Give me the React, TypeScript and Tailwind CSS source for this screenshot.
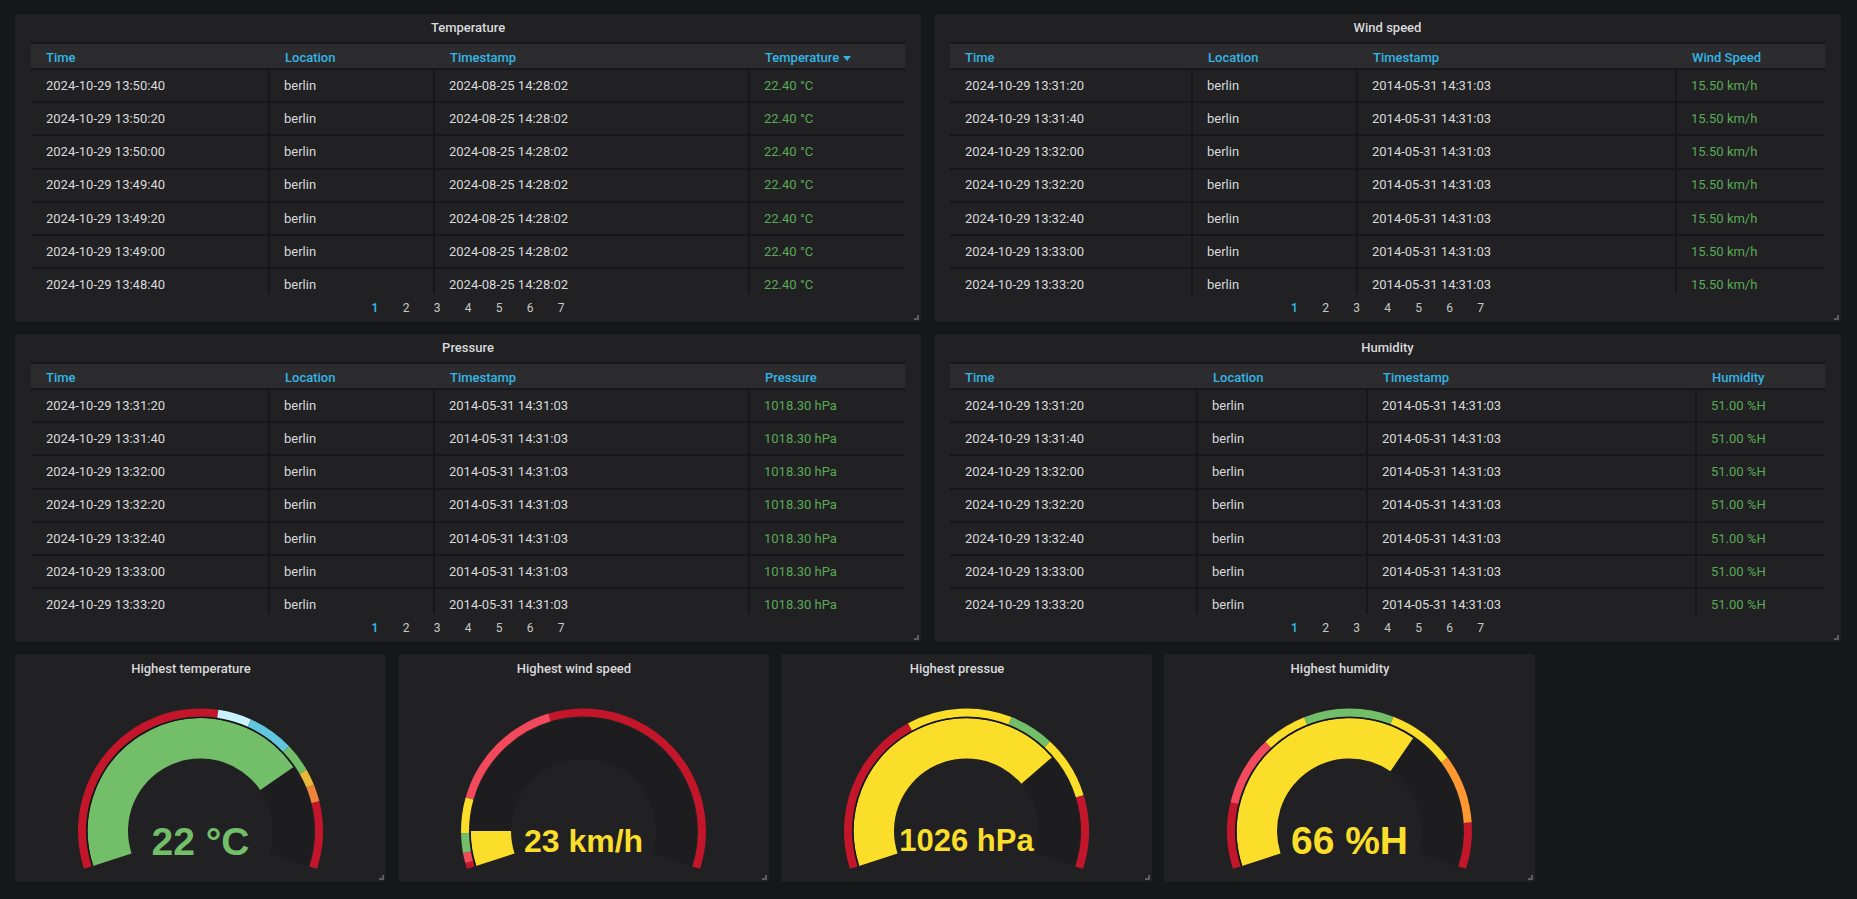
import React from "react"

type Row = { time: string; location: string; ts: string; value: string }

interface TableProps {
  title: string
  widths: [string, string, string]
  valueLabel: string
  sorted?: boolean
  rows: Row[]
  panelWidth: string
}

const tempTimes = ["13:50:40", "13:50:20", "13:50:00", "13:49:40", "13:49:20", "13:49:00", "13:48:40"]
const otherTimes = ["13:31:20", "13:31:40", "13:32:00", "13:32:20", "13:32:40", "13:33:00", "13:33:20"]

function makeRows(times: string[], ts: string, value: string): Row[] {
  return times.map((t) => ({ time: `2024-10-29 ${t}`, location: "berlin", ts, value }))
}

function ResizeHandle() {
  return <span className="absolute right-[2px] bottom-[2px] w-[5px] h-[5px] border-r-2 border-b-2 border-[#5d5d61]" />
}

function TablePanel({ title, widths, valueLabel, sorted, rows, panelWidth }: TableProps) {
  const labels = ["Time", "Location", "Timestamp"]
  return (
    <div className={`relative flex flex-col h-[308px] rounded-[3px] bg-[#212124] ${panelWidth}`}>
      <div className="h-[28px] shrink-0 flex items-center justify-center text-[13px] font-medium text-[#d8d9da]">{title}</div>
      <div className="px-4">
        <div className="flex h-[28px] bg-[#2c2c2f] border-y-2 border-[#18181a]">
          {labels.map((l, i) => (
            <div key={l} className={`shrink-0 pl-[15px] pt-[4px] leading-[19px] text-[13px] font-medium text-[#33b5e5] ${widths[i]}`}>
              {l}
            </div>
          ))}
          <div className="flex-1 pl-[15px] pt-[4px] leading-[19px] text-[13px] font-medium text-[#33b5e5] flex items-start gap-[4px]">
            <span>{valueLabel}</span>
            {sorted && (
              <svg width="8" height="5" viewBox="0 0 8 5" className="mt-[8px]">
                <path d="M0 0 L8 0 L4 5 Z" fill="#33b5e5" />
              </svg>
            )}
          </div>
        </div>
        <div className="h-[224px] overflow-hidden">
          {rows.map((r, i) => (
            <div key={i} className="flex border-b-2 border-[#161719] text-[13px] leading-[19.5px] text-[#d8d9da]">
              <div className={`shrink-0 pl-[15px] py-[5.85px] border-r-2 border-[#161719] ${widths[0]}`}>{r.time}</div>
              <div className={`shrink-0 pl-[14px] py-[5.85px] border-r-2 border-[#161719] ${widths[1]}`}>{r.location}</div>
              <div className={`shrink-0 pl-[14px] py-[5.85px] border-r-2 border-[#161719] ${widths[2]}`}>{r.ts}</div>
              <div className="flex-1 pl-[14px] py-[5.85px] text-[#5aa954]">{r.value}</div>
            </div>
          ))}
        </div>
      </div>
      <div className="h-[28px] flex items-center justify-center text-[12px] text-[#c8c9ca]">
        {[1, 2, 3, 4, 5, 6, 7].map((n) => (
          <span key={n} className={n === 1 ? "w-[31px] text-center font-semibold text-[#33b5e5]" : "w-[31px] text-center"}>
            {n}
          </span>
        ))}
      </div>
      <ResizeHandle />
    </div>
  )
}

// a = degrees along the gauge, 0 at bottom-left start, 216 at bottom-right end
function pt(cx: number, cy: number, r: number, a: number) {
  const t = ((162 + a) * Math.PI) / 180
  return [cx + r * Math.cos(t), cy + r * Math.sin(t)]
}

function sector(cx: number, cy: number, r0: number, r1: number, a0: number, a1: number) {
  const [x0, y0] = pt(cx, cy, r1, a0)
  const [x1, y1] = pt(cx, cy, r1, a1)
  const [x2, y2] = pt(cx, cy, r0, a1)
  const [x3, y3] = pt(cx, cy, r0, a0)
  const large = a1 - a0 > 180 ? 1 : 0
  return `M${x0} ${y0} A${r1} ${r1} 0 ${large} 1 ${x1} ${y1} L${x2} ${y2} A${r0} ${r0} 0 ${large} 0 ${x3} ${y3} Z`
}

function arc(cx: number, cy: number, r: number, a0: number, a1: number) {
  const [x0, y0] = pt(cx, cy, r, a0)
  const [x1, y1] = pt(cx, cy, r, a1)
  const large = a1 - a0 > 180 ? 1 : 0
  return `M${x0} ${y0} A${r} ${r} 0 ${large} 1 ${x1} ${y1}`
}

interface GaugeProps {
  title: string
  value: string
  color: string
  fill: number
  fontSize: number
  baseline: number
  bands: [number, number, string][]
}

function GaugePanel({ title, value, color, fill, fontSize, baseline, bands }: GaugeProps) {
  const cx = 185.5
  const cy = 148
  return (
    <div className="relative flex flex-col w-[371px] h-[228px] rounded-[3px] bg-[#212124]">
      <div className="h-[29px] pr-[19px] flex items-center justify-center text-[13px] font-medium text-[#d8d9da]">{title}</div>
      <svg width="371" height="199" viewBox="0 0 371 199">
        <path d={sector(cx, cy, 72.5, 113, 0, 216)} fill="#1d1d1f" />
        {bands.map(([a0, a1, c], i) => (
          <path key={i} d={sector(cx, cy, 114.5, 122.5, a0, a1)} fill={c} />
        ))}
        <path d={sector(cx, cy, 72.5, 113, 0, fill)} fill={color} />
        <path d={arc(cx, cy, 113.3, 0, fill)} stroke="#151517" strokeWidth="1.2" fill="none" />
        <text
          x={cx}
          y={baseline + 1}
          textAnchor="middle"
          fontSize={fontSize}
          fill={color}
          className="font-bold font-['Liberation_Sans',Arial,sans-serif]"
        >
          {value}
        </text>
      </svg>
      <ResizeHandle />
    </div>
  )
}

const DR = "#c4162a"
const RD = "#f2495c"
const GR = "#73bf69"
const YL = "#fade2a"

export default function App() {
  return (
    <div className="h-[899px] overflow-hidden bg-[#161719] pl-[15px] pt-[14px] font-['Roboto',sans-serif]">
      <div className="flex flex-col gap-[12px]">
        <div className="flex gap-[13px]">
          <TablePanel
            title="Temperature"
            panelWidth="w-[906px]"
            widths={["w-[239px]", "w-[165px]", "w-[315px]"]}
            valueLabel="Temperature"
            sorted
            rows={makeRows(tempTimes, "2024-08-25 14:28:02", "22.40 °C")}
          />
          <TablePanel
            title="Wind speed"
            panelWidth="w-[907px]"
            widths={["w-[243px]", "w-[165px]", "w-[319px]"]}
            valueLabel="Wind Speed"
            rows={makeRows(otherTimes, "2014-05-31 14:31:03", "15.50 km/h")}
          />
        </div>
        <div className="flex gap-[13px]">
          <TablePanel
            title="Pressure"
            panelWidth="w-[906px]"
            widths={["w-[239px]", "w-[165px]", "w-[315px]"]}
            valueLabel="Pressure"
            rows={makeRows(otherTimes, "2014-05-31 14:31:03", "1018.30 hPa")}
          />
          <TablePanel
            title="Humidity"
            panelWidth="w-[907px]"
            widths={["w-[248px]", "w-[170px]", "w-[329px]"]}
            valueLabel="Humidity"
            rows={makeRows(otherTimes, "2014-05-31 14:31:03", "51.00 %H")}
          />
        </div>
        <div className="flex gap-[12px]">
          <GaugePanel
            title="Highest temperature"
            value="22 °C"
            color={GR}
            fill={163.5}
            fontSize={39}
            baseline={171}
            bands={[
              [0, 116.4, DR],
              [116.4, 132.4, "#c8f2ff"],
              [132.4, 154.3, "#62c6de"],
              [154.3, 168, GR],
              [168, 175.8, "#eab839"],
              [175.8, 184, "#ef843c"],
              [184, 216, DR],
            ]}
          />
          <GaugePanel
            title="Highest wind speed"
            value="23 km/h"
            color={YL}
            fill={18}
            fontSize={32}
            baseline={168}
            bands={[
              [0, 2.8, DR],
              [2.8, 7.7, RD],
              [7.7, 17, GR],
              [17, 34, YL],
              [34, 91.4, RD],
              [91.4, 216, DR],
            ]}
          />
          <GaugePanel
            title="Highest pressue"
            value="1026 hPa"
            color={YL}
            fill={157.2}
            fontSize={31}
            baseline={167}
            bands={[
              [0, 79.5, DR],
              [79.5, 129.6, YL],
              [129.6, 151, GR],
              [151, 181, YL],
              [181, 216, DR],
            ]}
          />
          <GaugePanel
            title="Highest humidity"
            value="66 %H"
            color={YL}
            fill={142.4}
            fontSize={39}
            baseline={170}
            bands={[
              [0, 31.6, DR],
              [31.6, 64.7, RD],
              [64.7, 86.3, YL],
              [86.3, 129, GR],
              [129, 161.3, YL],
              [161.3, 194, "#ff9830"],
              [194, 216, DR],
            ]}
          />
        </div>
      </div>
    </div>
  )
}
